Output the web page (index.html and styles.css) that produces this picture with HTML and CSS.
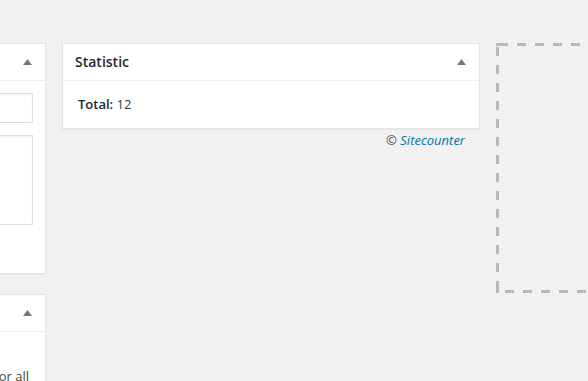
FILE: index.html
```html
<!DOCTYPE html>
<html lang="en">
<head>
<meta charset="utf-8">
<title>Dashboard</title>
<link rel="stylesheet" href="styles.css">
</head>
<body>
<div class="dashboard">
  <div class="column">
    <div class="postbox">
      <h2 class="hndle"><span>Quick Draft</span><svg class="toggle" width="9" height="6" viewBox="0 0 9 6"><polygon points="4.5,0 9,6 0,6"/></svg></h2>
      <form class="draft">
        <input class="field" type="text" aria-label="Title">
        <textarea class="area" aria-label="Content"></textarea>
        <div class="submit"><button class="button" type="button">Save Draft</button></div>
      </form>
    </div>
    <div class="postbox">
      <h2 class="hndle"><span>Sitecounter Settings</span><svg class="toggle" width="9" height="6" viewBox="0 0 9 6"><polygon points="4.5,0 9,6 0,6"/></svg></h2>
      <div class="inside-left">
        <p class="wrapline">Show the number of site visits for all</p>
      </div>
    </div>
  </div>
  <div class="column">
    <div class="postbox flush">
      <h2 class="hndle"><span>Statistic</span><svg class="toggle" width="9" height="6" viewBox="0 0 9 6"><polygon points="4.5,0 9,6 0,6"/></svg></h2>
      <div class="inside"><strong>Total:</strong> 12</div>
    </div>
    <p class="credit"><span class="copy">©</span> <a class="link" href="#">Sitecounter</a></p>
  </div>
  <div class="column">
    <div class="empty-container"></div>
  </div>
</div>
</body>
</html>
```
FILE: styles.css
```css
html, body {
  margin: 0;
  padding: 0;
}
body {
  background: #f1f1f1;
  font-family: "Open Sans", "Noto Sans", sans-serif;
  font-size: 13px;
  color: #444;
  overflow: hidden;
  width: 588px;
  height: 381px;
}
.dashboard {
  display: flex;
  align-items: flex-start;
  gap: 16px;
  padding-top: 43px;
  margin-left: -372px;
}
.column {
  width: 418px;
  flex: none;
}
.postbox {
  background: #fff;
  border: 1px solid #e5e5e5;
  box-shadow: 0 1px 1px rgba(0, 0, 0, 0.04);
  margin-bottom: 20px;
}
.postbox.flush {
  margin-bottom: 0;
}
.hndle {
  display: flex;
  justify-content: space-between;
  align-items: center;
  margin: 0;
  padding: 8px 12px;
  font-size: 14px;
  line-height: 20px;
  font-weight: 600;
  color: #23282d;
  border-bottom: 1px solid #eee;
}
.toggle {
  display: block;
  margin-right: 1px;
  fill: #72777c;
}
.draft {
  margin: 0;
  padding: 12px 12px 0;
}
.field, .area {
  display: block;
  width: 100%;
  box-sizing: border-box;
  border: 1px solid #ddd;
  box-shadow: inset 0 1px 2px rgba(0, 0, 0, 0.07);
  background: #fff;
  margin: 0;
  font-family: inherit;
}
.field {
  height: 30px;
}
.area {
  height: 90px;
  margin-top: 12px;
  resize: none;
}
.submit {
  height: 48px;
  display: flex;
  align-items: center;
}
.button {
  height: 28px;
  padding: 0 10px;
  border: 1px solid #ccc;
  background: #f7f7f7;
  color: #555;
  font-family: inherit;
  font-size: 13px;
}
.inside-left {
  padding: 0 12px;
}
.wrapline {
  margin: 35px 0 0;
  line-height: 18px;
  white-space: nowrap;
  text-align: right;
  padding-right: 4px;
}
.inside {
  padding: 14px 12px 15px 15px;
  line-height: 18px;
  color: #32373c;
}
.inside strong {
  font-weight: 600;
  color: #23282d;
}
.credit {
  margin: 2px 0 0;
  padding-right: 15px;
  text-align: right;
  font-style: italic;
  line-height: 18px;
  color: #444;
}
.link {
  color: #0073aa;
  text-decoration: none;
}
.empty-container {
  height: 250px;
  background:
    linear-gradient(#b4b9be, #b4b9be) 0 0 / 3px 3px no-repeat,
    linear-gradient(#b4b9be, #b4b9be) 0 100% / 3px 3px no-repeat,
    repeating-linear-gradient(to right, #b4b9be 0 9px, transparent 9px 18px) 3px 0 / calc(100% - 3px) 3px no-repeat,
    repeating-linear-gradient(to right, #b4b9be 0 9px, transparent 9px 18px) 9px 100% / calc(100% - 9px) 3px no-repeat,
    repeating-linear-gradient(to bottom, #b4b9be 0 9px, transparent 9px 18px) 0 4px / 3px calc(100% - 4px) no-repeat,
    repeating-linear-gradient(to bottom, #b4b9be 0 9px, transparent 9px 18px) 100% 4px / 3px calc(100% - 4px) no-repeat;
}
```
